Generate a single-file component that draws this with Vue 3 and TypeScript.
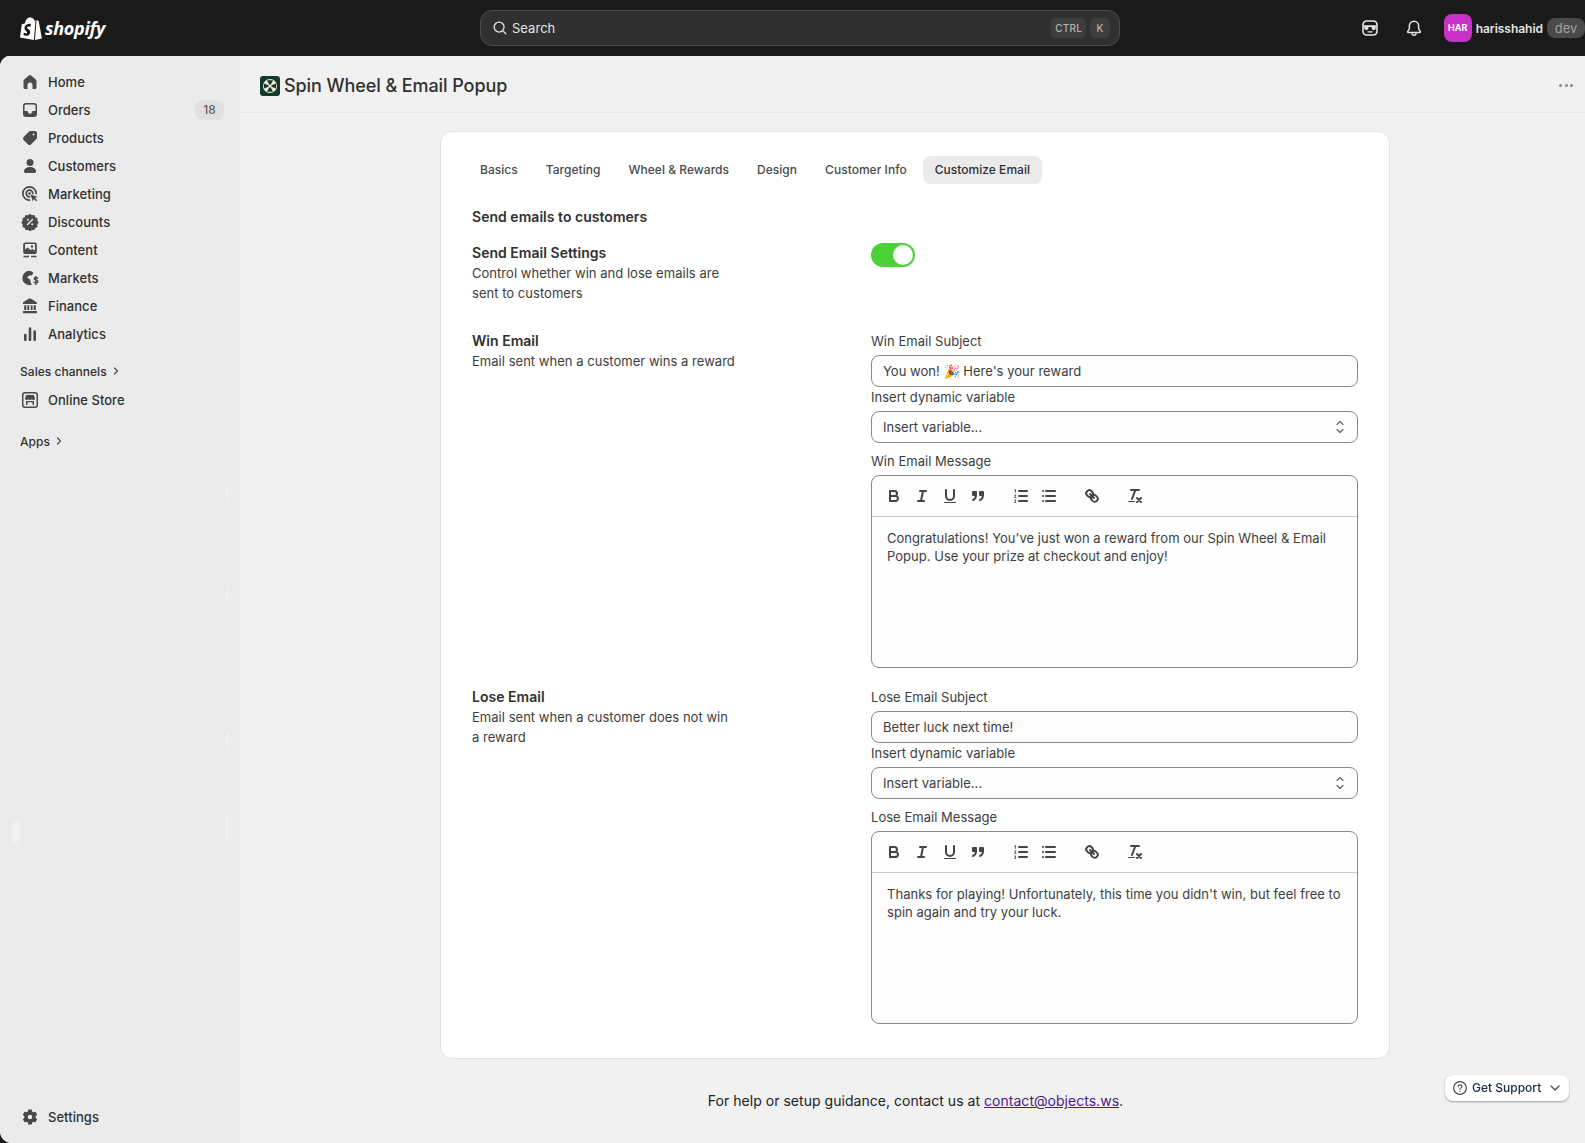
<script setup lang="ts">
import { ref } from "vue";

interface NavItem {
  label: string;
  icon: string;
  badge?: string;
}

const navItems: NavItem[] = [
  { label: "Home", icon: "home" },
  { label: "Orders", icon: "orders", badge: "18" },
  { label: "Products", icon: "products" },
  { label: "Customers", icon: "customers" },
  { label: "Marketing", icon: "marketing" },
  { label: "Discounts", icon: "discounts" },
  { label: "Content", icon: "content" },
  { label: "Markets", icon: "markets" },
  { label: "Finance", icon: "finance" },
  { label: "Analytics", icon: "analytics" },
];

const tabs = ["Basics", "Targeting", "Wheel & Rewards", "Design", "Customer Info", "Customize Email"];
const activeTab = ref("Customize Email");
const sendEmails = ref(true);

// faint leftover marks on the sidebar edge
const edgeMarks = [
  { top: 433, height: 12 },
  { top: 533, height: 12 },
  { top: 676, height: 18 },
  { top: 759, height: 27 },
];

interface EmailBlock {
  title: string;
  desc: string;
  subjectLabel: string;
  subject: string;
  messageLabel: string;
  message: string;
}

const emails: EmailBlock[] = [
  {
    title: "Win Email",
    desc: "Email sent when a customer wins a reward",
    subjectLabel: "Win Email Subject",
    subject: "You won! 🎉 Here's your reward",
    messageLabel: "Win Email Message",
    message: "Congratulations! You've just won a reward from our Spin Wheel & Email Popup. Use your prize at checkout and enjoy!",
  },
  {
    title: "Lose Email",
    desc: "Email sent when a customer does not win a reward",
    subjectLabel: "Lose Email Subject",
    subject: "Better luck next time!",
    messageLabel: "Lose Email Message",
    message: "Thanks for playing! Unfortunately, this time you didn't win, but feel free to spin again and try your luck.",
  },
];
</script>

<template>
  <div class="app">
    <header class="topbar">
      <div class="logo">
        <svg class="bag" viewBox="0 0 22 25" width="22" height="25">
          <path fill="#fff" d="M15.6 4.3 14.4 4.7C14 3.3 13.2 2 11.8 2h-.2C11.200 1.500 10.700 1.200 10.200 1.200 6.900 1.200 5.300 5.300 4.800 7.400L2.500 8.100c-.7.2-.7.2-.8.9L0 21.400 13.900 24z"/>
          <path fill="#fff" d="M16.500 4.200 15 24l7-1.500S18.700 5.100 18.600 5c-.1-.3-.3-.4-.5-.4z"/>
          <path fill="#1a1a1a" d="M11 8.500 10.300 10.800s-.8-.4-1.800-.4c-1.400 0-1.500.9-1.500 1.100 0 1.200 3.200 1.700 3.200 4.600 0 2.300-1.400 3.700-3.300 3.700-2.300 0-3.500-1.400-3.500-1.400l.6-2s1.200 1 2.200 1c.7 0 .9-.5.900-.9 0-1.600-2.600-1.700-2.600-4.300 0-2.200 1.600-4.400 4.800-4.400 1.200 0 1.700.5 1.700.5z"/>
        </svg>
        <span class="wordmark">shopify</span>
      </div>

      <div class="search">
        <svg viewBox="0 0 20 20" width="18" height="18" fill="none" stroke="#e3e3e3" stroke-width="1.500" stroke-linecap="round">
          <circle cx="9" cy="9" r="5.500" />
          <path d="m13.200 13.200 3.300 3.300" />
        </svg>
        <span class="search-text">Search</span>
        <kbd class="key">CTRL</kbd>
        <kbd class="key">K</kbd>
      </div>

      <div class="top-right">
        <svg class="top-icon" viewBox="0 0 20 20" width="20" height="20">
          <path fill="none" stroke="#e3e3e3" stroke-width="1.600" d="M7 3h6c2.600 0 4 1.500 4 4v6c0 2.500-1.400 4-4 4H7c-2.600 0-4-1.500-4-4V7c0-2.500 1.400-4 4-4z" />
          <path fill="#e3e3e3" d="M3 7.200h14v1.400h-1.200v1.500a2.100 2.100 0 0 1-4.200 0V9H8.400v1.100a2.100 2.100 0 0 1-4.200 0V8.600H3zM7.500 13.200h5v1.400h-5z" />
        </svg>
        <svg class="top-icon bell" viewBox="0 0 20 20" width="20" height="20" fill="none" stroke="#e3e3e3" stroke-width="1.500" stroke-linejoin="round">
          <path d="M10 3.200a4.600 4.600 0 0 0-4.600 4.600v2.100c0 1-.4 1.700-1 2.500l-.7 1c-.3.500 0 1.100.6 1.100h11.400c.6 0 .9-.6.600-1.100l-.7-1c-.6-.8-1-1.500-1-2.500V7.800A4.600 4.600 0 0 0 10 3.200z" />
          <path d="M8 15.200a2 2 0 0 0 4 0" />
        </svg>
        <div class="avatar">HAR</div>
        <span class="username">harisshahid</span>
        <span class="dev-pill">dev</span>
      </div>
    </header>

    <div class="shell">
      <aside class="sidebar">
        <a v-for="item in navItems" :key="item.label" class="nav-row">
          <svg class="nav-icon" viewBox="0 0 20 20" width="20" height="20">
            <path v-if="item.icon === 'home'" d="M9.200 3.300 4.200 7.400A2 2 0 0 0 3.500 9v6.500A1.500 1.500 0 0 0 5 17h2.500v-4a2.500 2.500 0 0 1 5 0v4H15a1.500 1.500 0 0 0 1.500-1.500V9a2 2 0 0 0-.7-1.600l-5-4.100a1.300 1.300 0 0 0-1.600 0z" />
            <path v-else-if="item.icon === 'orders'" fill-rule="evenodd" d="M3 6a3 3 0 0 1 3-3h8a3 3 0 0 1 3 3v8a3 3 0 0 1-3 3H6a3 3 0 0 1-3-3zm1.500 5V6A1.500 1.500 0 0 1 6 4.500h8A1.500 1.500 0 0 1 15.500 6v5H13a1 1 0 0 0-1 .8 2 2 0 0 1-4 0 1 1 0 0 0-1-.8z" />
            <path v-else-if="item.icon === 'products'" fill-rule="evenodd" d="M10.500 3H15a2 2 0 0 1 2 2v4.500a2 2 0 0 1-.6 1.400l-5.500 5.500a2 2 0 0 1-2.800 0l-4.500-4.500a2 2 0 0 1 0-2.800l5.500-5.500A2 2 0 0 1 10.500 3zm3 2.500a1 1 0 1 0 0 2 1 1 0 0 0 0-2z" />
            <template v-else-if="item.icon === 'customers'">
              <circle cx="10" cy="6.500" r="3.500" />
              <path d="M4 15.500c0-3 2.700-4.500 6-4.500s6 1.500 6 4.500c0 .8-.7 1.500-1.500 1.500h-9C4.700 17 4 16.300 4 15.500z" />
            </template>
            <template v-else-if="item.icon === 'marketing'">
              <path fill="none" stroke="#4a4a4a" stroke-width="1.700" stroke-linecap="round" d="M9.500 16.200a6.700 6.700 0 1 1 6.700-6.700M9.500 12.800a3.300 3.300 0 1 1 3.300-3.300" />
              <circle cx="9.500" cy="9.500" r="1.300" />
              <path d="m10.500 10.500 7 2.300-2.400 1.200 2.200 2.200-1.100 1.100-2.200-2.200-1.200 2.400z" />
            </template>
            <template v-else-if="item.icon === 'discounts'">
              <path d="M10 2.200l2 1.400 2.400-.2.900 2.200 2.200 1-.2 2.400 1.400 2-1.400 1.900.2 2.400-2.200 1-.9 2.200-2.400-.2-2 1.400-2-1.400-2.400.2-.9-2.200-2.200-1 .2-2.400-1.400-2 1.400-2-.2-2.300 2.200-1 .9-2.200 2.400.2z" transform="translate(0 -.4)" />
              <path fill="none" stroke="#ebebeb" stroke-width="1.500" stroke-linecap="round" d="m7.500 12.500 5-5" />
              <circle cx="7.800" cy="7.800" r="1" fill="#ebebeb" />
              <circle cx="12.200" cy="12.200" r="1" fill="#ebebeb" />
            </template>
            <template v-else-if="item.icon === 'content'">
              <path fill-rule="evenodd" d="M5 2.500h10A1.800 1.800 0 0 1 16.800 4.300v8A1.800 1.800 0 0 1 15 14H5a1.800 1.800 0 0 1-1.800-1.800v-8A1.800 1.800 0 0 1 5 2.500zM5 4v5.500l2.500-2 3 2.500 2-1 2.500 1.500V4zm7 1.200a1.200 1.200 0 1 0 0 2.400 1.200 1.200 0 0 0 0-2.400z" />
              <path d="M3.500 15.800h5.500v1.400H3.500zM11 15.800h5.500v1.400H11z" />
            </template>
            <template v-else-if="item.icon === 'markets'">
              <path d="M9.500 2.800a7.200 7.200 0 0 0 0 14.400c.9 0 1.700-.2 2.400-.4-1.200-1.600-1.700-3.500-1.500-5.300-1 .1-1.800-.5-2.100-1.400L7 9.200 9.300 7.500c.8-.6 1.700-.3 2.200.2l2-2.800A7 7 0 0 0 9.500 2.800z" />
              <path fill="none" stroke="#4a4a4a" stroke-width="1.400" stroke-linecap="round" d="M17.700 10.300c-.4-.5-1-.8-1.800-.8-1 0-1.700.5-1.700 1.300 0 1.800 3.700.9 3.700 2.800 0 .8-.8 1.400-1.900 1.400-.8 0-1.500-.3-2-.9M15.900 8.500v8" />
            </template>
            <template v-else-if="item.icon === 'finance'">
              <path fill-rule="evenodd" d="M10 2.500c.4 0 .7.100 1 .3l5 3c.6.300.9.800.9 1.400v.8H2.900v-.8c0-.6.300-1.100.9-1.400l5-3c.400-.2.800-.3 1.200-.3z" />
              <path d="M4.200 9.300h2.100v4.700H4.200zM7.300 9.300h1.900v4.700H7.300zM10.700 9.300h1.900v4.700h-1.900zM13.700 9.300h2.100v4.700h-2.100zM3 15h14v2.200H3z" />
            </template>
            <path v-else d="M8.700 4.500a1.300 1.300 0 0 1 2.600 0V16a1 1 0 0 1-1 1h-.6a1 1 0 0 1-1-1zM4 11a1.300 1.300 0 0 1 2.600 0v5a1 1 0 0 1-1 1H5a1 1 0 0 1-1-1zM13.400 7.500a1.300 1.300 0 0 1 2.600 0V16a1 1 0 0 1-1 1h-.6a1 1 0 0 1-1-1z" />
          </svg>
          <span>{{ item.label }}</span>
          <span v-if="item.badge" class="nav-badge">{{ item.badge }}</span>
        </a>

        <div class="nav-group sales">
          Sales channels
          <svg viewBox="0 0 10 10" width="10" height="10" fill="none" stroke="#4a4a4a" stroke-width="1.200" stroke-linecap="round" stroke-linejoin="round"><path d="m3.500 2 3 3-3 3" /></svg>
        </div>
        <a class="nav-row">
          <svg class="nav-icon" viewBox="0 0 20 20" width="20" height="20">
            <path fill-rule="evenodd" d="M5 2h10a3 3 0 0 1 3 3v10a3 3 0 0 1-3 3H5a3 3 0 0 1-3-3V5a3 3 0 0 1 3-3zm0 1.500A1.500 1.500 0 0 0 3.500 5v10A1.500 1.500 0 0 0 5 16.500h10a1.500 1.500 0 0 0 1.500-1.500V5A1.500 1.500 0 0 0 15 3.500z" />
            <path d="M6.300 5h7.400l1.300 3.200c0 1.100-.8 1.800-1.700 1.800-.6 0-1.100-.3-1.500-.7-.4.400-1 .7-1.800.7s-1.400-.3-1.800-.7c-.4.400-.9.700-1.500.7-.9 0-1.700-.7-1.700-1.800z" />
            <path fill-rule="evenodd" d="M6 11h8v4H6zm1.500 1.300V15h5v-2.700z" />
          </svg>
          <span>Online Store</span>
        </a>
        <div class="nav-group apps">
          Apps
          <svg viewBox="0 0 10 10" width="10" height="10" fill="none" stroke="#4a4a4a" stroke-width="1.200" stroke-linecap="round" stroke-linejoin="round"><path d="m3.500 2 3 3-3 3" /></svg>
        </div>

        <a class="nav-row settings">
          <svg class="nav-icon" viewBox="0 0 20 20" width="20" height="20">
            <path fill-rule="evenodd" d="M8.300 2.500h3.400l.5 2 1.300.8 2-.6 1.700 3-1.500 1.400v1.800l1.500 1.400-1.700 3-2-.6-1.300.8-.5 2H8.300l-.5-2-1.300-.8-2 .6-1.700-3L4.300 10.900V9.100L2.800 7.700l1.700-3 2 .6 1.300-.8zM10 7.800a2.200 2.200 0 1 0 0 4.400 2.200 2.200 0 0 0 0-4.400z" />
          </svg>
          <span>Settings</span>
        </a>
        <span class="ghost-pill"></span>
        <span
          v-for="mark in edgeMarks"
          :key="mark.top"
          class="edge-mark"
          :style="{ top: mark.top + 'px', height: mark.height + 'px' }"
        ></span>
      </aside>

      <main class="main">
        <div class="page-header">
          <svg class="app-icon" viewBox="0 0 20 20" width="20" height="20">
            <rect width="20" height="20" rx="3" fill="#123a2c" />
            <circle cx="10" cy="10" r="7" fill="#f0ead6" />
            <path fill="#123a2c" d="M10 10 7 4.200h6zM10 10l6 -2.500v5zM10 10l-3 5.800h6zM10 10 4 7.500v5z" />
            <circle cx="10" cy="10" r="1.500" fill="#f0ead6" />
          </svg>
          <h1 class="page-title">Spin Wheel &amp; Email Popup</h1>
          <span class="dots"><i></i><i></i><i></i></span>
        </div>

        <section class="card">
          <div class="tabs">
            <button
              v-for="tab in tabs"
              :key="tab"
              class="tab"
              :class="{ active: tab === activeTab }"
              @click="activeTab = tab"
            >{{ tab }}</button>
          </div>

          <h2 class="heading">Send emails to customers</h2>

          <div class="row toggle-row">
            <div class="row-info">
              <h3>Send Email Settings</h3>
              <p>Control whether win and lose emails are sent to customers</p>
            </div>
            <div>
              <button class="toggle" :class="{ on: sendEmails }" @click="sendEmails = !sendEmails"><span></span></button>
            </div>
          </div>

          <div v-for="email in emails" :key="email.title" class="row email-row">
            <div class="row-info">
              <h3>{{ email.title }}</h3>
              <p>{{ email.desc }}</p>
            </div>
            <div class="fields">
              <label class="field-label">{{ email.subjectLabel }}</label>
              <input class="text-input" type="text" :value="email.subject" />
              <label class="field-label">Insert dynamic variable</label>
              <div class="select">
                <span>Insert variable...</span>
                <svg viewBox="0 0 12 18" width="12" height="18" fill="none" stroke="#616161" stroke-width="1.100" stroke-linecap="round" stroke-linejoin="round">
                  <path d="m3 6.500 3-3 3 3M3 11.500l3 3 3-3" />
                </svg>
              </div>
              <label class="field-label message">{{ email.messageLabel }}</label>
              <div class="editor">
                <div class="toolbar">
                  <span class="group">
                    <span class="tool"><svg viewBox="0 0 18 18"><path d="M5 4h4.500A2.500 2.500 0 0 1 12 6.500 2.500 2.500 0 0 1 9.500 9H5zM5 9h5.500a2.500 2.500 0 0 1 2.500 2.500 2.500 2.500 0 0 1-2.500 2.500H5z" /></svg></span>
                    <span class="tool"><svg viewBox="0 0 18 18"><path d="M7 4h6M5 14h6M8 14l2-10" /></svg></span>
                    <span class="tool"><svg viewBox="0 0 18 18"><path d="M5 3v6a4 4 0 0 0 4 4 4 4 0 0 0 4-4V3" /><rect class="solid" x="3" y="15" width="12" height="1" rx=".5" /></svg></span>
                    <span class="tool"><svg viewBox="0 0 18 18"><rect class="block" x="4" y="5" width="3" height="3" /><rect class="block" x="11" y="5" width="3" height="3" /><path d="M7 8c0 4-3 5-3 5M14 8c0 4-3 5-3 5" /></svg></span>
                  </span>
                  <span class="group">
                    <span class="tool"><svg viewBox="0 0 18 18"><path d="M7 4h8M7 9h8M7 14h8" /><path class="thin" d="M2.500 3 3.500 2.500V5.500M2.500 8 4 8 2.500 10.500H4M2.500 13H4L3 14l1 1-.5.500H2.500" /></svg></span>
                    <span class="tool"><svg viewBox="0 0 18 18"><path d="M6 4h9M6 9h9M6 14h9M3 4h0M3 9h0M3 14h0" /></svg></span>
                  </span>
                  <span class="group">
                    <span class="tool"><svg viewBox="0 0 18 18"><path d="M7 7l4 4" /><path d="M8.900 4.600a3.500 3.500 0 0 1 .4 4.700 3.500 3.500 0 0 1-4.700-.4C3.200 7.500 2 6.400 4.200 4.200s3.300-1 4.700.4z" /><path d="M13.400 9.100a3.500 3.500 0 0 0-4.700-.4 3.500 3.500 0 0 0 .4 4.700c1.400 1.400 2.500 2.500 4.700.4s1-3.300-.4-4.700z" /></svg></span>
                  </span>
                  <span class="group">
                    <span class="tool"><svg viewBox="0 0 18 18"><path d="M5 3h8M6 12 9.400 3M11 11l4 4M15 11l-4 4" /><rect class="solid" x="2" y="14" width="7" height="1" rx=".5" /></svg></span>
                  </span>
                </div>
                <div class="editor-body">{{ email.message }}</div>
              </div>
            </div>
          </div>
        </section>

        <p class="help">For help or setup guidance, contact us at <a href="#" class="help-link">contact@objects.ws</a>.</p>
      </main>
    </div>

    <button class="support">
      <svg viewBox="0 0 16 16" width="16" height="16" fill="none" stroke="#4a4a4a" stroke-width="1.200" stroke-linecap="round">
        <circle cx="8" cy="8" r="6.400" />
        <path d="M6.200 6.300A1.900 1.900 0 0 1 8 4.900c1 0 1.800.7 1.800 1.600 0 1.300-1.800 1.400-1.800 2.700" />
        <path d="M8 11.200v.1" />
      </svg>
      <span>Get Support</span>
      <svg viewBox="0 0 12 12" width="12" height="12" fill="none" stroke="#4a4a4a" stroke-width="1.300" stroke-linecap="round" stroke-linejoin="round"><path d="m2 4 4 4 4-4" /></svg>
    </button>
  </div>
</template>

<style>
html, body {
  margin: 0;
  background: #1a1a1a;
  overflow: hidden;
}
</style>

<style scoped>
.app {
  height: 100vh;
  display: flex;
  flex-direction: column;
  font-family: Inter, "Noto Sans", sans-serif;
  font-size: 13px;
  letter-spacing: 0.03px;
  color: #303030;
}

.topbar {
  height: 56px;
  flex-shrink: 0;
  background: #1a1a1a;
  display: flex;
  align-items: center;
  position: relative;
}

.logo {
  display: flex;
  align-items: center;
  margin-left: 20px;
  width: 460px;
  gap: 3px;
}

.wordmark {
  font-family: "Open Sans", sans-serif;
  font-style: italic;
  font-weight: 700;
  font-size: 18px;
  letter-spacing: -0.3px;
  color: #fff;
}

.search {
  width: 640px;
  height: 36px;
  box-sizing: border-box;
  background: #303030;
  border: 1px solid #4a4a4a;
  border-radius: 12px;
  display: flex;
  align-items: center;
  padding: 0 9px 0 10px;
  gap: 4px;
}

.search-text {
  color: #e3e3e3;
  font-size: 13px;
  flex: 1;
  margin-left: -1px;
}

.key {
  font-family: Inter, sans-serif;
  font-size: 10px;
  font-weight: 500;
  height: 20px;
  line-height: 20px;
  min-width: 20px;
  box-sizing: border-box;
  text-align: center;
  padding: 0 4px;
  color: #b5b5b5;
  background: #3d3d3d;
  border-radius: 4px;
  letter-spacing: 0.2px;
}

.top-right {
  margin-left: auto;
  display: flex;
  align-items: center;
  white-space: nowrap;
}

.top-icon {
  margin-right: 24px;
}

.bell {
  margin-right: 20px;
}

.avatar {
  width: 28px;
  height: 28px;
  border-radius: 8px;
  background: #c831c8;
  color: #fff;
  font-size: 9px;
  font-weight: 700;
  line-height: 28px;
  text-align: center;
}

.username {
  color: #e3e3e3;
  font-weight: 600;
  font-size: 12px;
  letter-spacing: -0.03px;
  margin: 0 4px;
}

.dev-pill {
  color: #a0a0a0;
  background: #4a4a4a;
  font-size: 13px;
  height: 20px;
  line-height: 20px;
  width: 38px;
  text-align: center;
  border-radius: 8px;
}

.shell {
  flex: 1;
  min-height: 0;
  display: flex;
  background: #f1f1f1;
  border-radius: 12px 0 0 12px;
  border-top: 1px solid #dedede;
  margin-top: -1px;
  overflow: hidden;
}

.sidebar {
  width: 240px;
  flex-shrink: 0;
  background: #ebebeb;
  box-sizing: border-box;
  padding: 12px 0 12px;
  display: flex;
  flex-direction: column;
  position: relative;
}

.ghost-pill {
  position: absolute;
  left: 12px;
  top: 763px;
  width: 8px;
  height: 28px;
  border-radius: 8px 0 0 8px;
  background: #f0f0f0;
}

.edge-mark {
  position: absolute;
  left: 227px;
  width: 1px;
  background: #f6f6f6;
}

.nav-row {
  height: 28px;
  display: flex;
  align-items: center;
  font-weight: 500;
  padding: 0 16px 0 20px;
  color: #303030;
}

.nav-icon {
  fill: #4a4a4a;
  margin-right: 8px;
  flex-shrink: 0;
}

.nav-badge {
  margin-left: auto;
  width: 29px;
  height: 20px;
  line-height: 20px;
  text-align: center;
  font-size: 12px;
  font-weight: 500;
  color: #616161;
  background: #e0e0e0;
  border-radius: 8px;
}

.nav-group {
  height: 28px;
  box-sizing: border-box;
  padding: 0 0 2px 20px;
  display: flex;
  align-items: center;
  gap: 4px;
  font-size: 12px;
  font-weight: 500;
  color: #303030;
}

.sales {
  margin-top: 10px;
}

.apps {
  margin-top: 14px;
}

.settings {
  margin-top: auto;
}

.main {
  flex: 1;
  min-width: 0;
}

.page-header {
  height: 57px;
  box-sizing: border-box;
  border-bottom: 1px solid #e8e8e8;
  display: flex;
  align-items: center;
  padding: 3px 12px 0 20px;
}

.app-icon {
  margin-right: 4px;
}

.page-title {
  margin: 0;
  font-size: 18px;
  font-weight: 550;
  letter-spacing: -0.08px;
  color: #303030;
}

.dots {
  margin-left: auto;
  display: flex;
  gap: 2.5px;
}

.dots i {
  width: 3px;
  height: 3px;
  border-radius: 50%;
  background: #8a8a8a;
}

.card {
  width: 950px;
  box-sizing: border-box;
  margin: 18px 0 0 200px;
  background: #fff;
  border: 1px solid #e3e3e3;
  border-radius: 12px;
  padding: 24px 31px 34px;
}

.tabs {
  display: flex;
  gap: 4px;
  margin-left: -4px;
}

.tab {
  height: 28px;
  padding: 0 12px 1px;
  border: none;
  border-radius: 8px;
  background: none;
  font-family: inherit;
  font-size: 12px;
  font-weight: 500;
  letter-spacing: 0.03px;
  color: #4a4a4a;
}

.tab.active {
  background: #ebebeb;
  color: #303030;
}

.heading {
  margin: 23px 0 16px;
  font-size: 14px;
  line-height: 20px;
  font-weight: 600;
  color: #303030;
}

.row {
  display: grid;
  grid-template-columns: 399px 487px;
}

.toggle-row {
  margin-bottom: 28px;
}

.email-row {
  margin-bottom: 19px;
}

.email-row:last-child {
  margin-bottom: 0;
}

.row-info h3 {
  margin: 0;
  font-size: 14px;
  line-height: 20px;
  font-weight: 600;
  color: #303030;
}

.row-info p {
  margin: 0;
  max-width: 265px;
  font-size: 13px;
  line-height: 20px;
  color: #3d3d3d;
}

.toggle {
  display: block;
  width: 44px;
  height: 24px;
  border: none;
  border-radius: 12px;
  padding: 0;
  background: #ccc;
  position: relative;
}

.toggle.on {
  background: #4cd137;
}

.toggle span {
  position: absolute;
  top: 2px;
  left: 2px;
  width: 20px;
  height: 20px;
  border-radius: 50%;
  background: #fff;
}

.toggle.on span {
  left: 22px;
}

.fields {
  display: flex;
  flex-direction: column;
}

.field-label {
  font-size: 13px;
  line-height: 20px;
  color: #3d3d3d;
  margin-bottom: 4px;
}

.field-label.message {
  margin-top: 8px;
}

.text-input,
.select {
  height: 32px;
  box-sizing: border-box;
  border: 1px solid #8a8a8a;
  border-radius: 8px;
  background: #fdfdfd;
  font-family: inherit;
  font-size: 13px;
  letter-spacing: 0.03px;
  color: #3d3d3d;
  padding: 0 11px;
  outline: none;
}

.select {
  display: flex;
  align-items: center;
  justify-content: space-between;
  padding-right: 11px;
}

.editor {
  border: 1px solid #8a8a8a;
  border-radius: 8px;
  background: #fdfdfd;
  height: 193px;
  box-sizing: border-box;
  overflow: hidden;
}

.toolbar {
  display: flex;
  height: 41px;
  box-sizing: border-box;
  padding: 8px;
  border-bottom: 1px solid #ccc;
}

.group {
  display: flex;
  margin-right: 15px;
}

.tool {
  width: 28px;
  height: 24px;
  box-sizing: border-box;
  padding: 3px 5px;
  display: block;
}

.tool svg {
  display: block;
  width: 18px;
  height: 18px;
  fill: none;
  stroke: #444;
  stroke-width: 2;
  stroke-linecap: round;
  stroke-linejoin: round;
}

.tool svg .solid {
  fill: #444;
  stroke: none;
}

.tool svg .block {
  fill: #444;
}

.tool svg .thin {
  stroke-width: 0.8;
}

.editor-body {
  padding: 12px 15px;
  font-size: 13px;
  line-height: 18px;
  color: #3d3d3d;
}

.help {
  margin: 32px 0 0;
  font-family: Inter, sans-serif;
  font-size: 14px;
  line-height: 20px;
  text-align: center;
  position: relative;
  left: 3px;
  color: #202223;
}

.help-link {
  color: #4a1a8a;
}

.support {
  position: fixed;
  left: 1445px;
  top: 1075px;
  width: 124px;
  height: 26px;
  box-sizing: border-box;
  display: flex;
  align-items: center;
  padding: 0 8px 0 7px;
  gap: 4px;
  border: none;
  border-radius: 8px;
  background: #fff;
  box-shadow: 0 1px 2px rgba(0, 0, 0, 0.35);
  font-family: Inter, sans-serif;
  font-size: 12px;
  font-weight: 500;
  color: #202a44;
}

.support span {
  flex: 1;
  text-align: left;
  padding-bottom: 1px;
}
</style>
